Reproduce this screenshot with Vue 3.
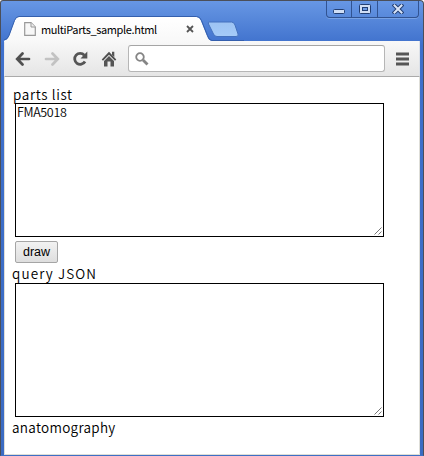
<script setup>
import { ref } from 'vue'

const parts = ref('FMA5018')
const query = ref('')
</script>

<template>
  <div class="window">
    <header class="titlebar">
      <svg class="tab-shape" width="240" height="26" viewBox="0 0 240 26">
        <defs>
          <linearGradient id="tabFill" x1="0" y1="0" x2="0" y2="1">
            <stop offset="0" stop-color="#ffffff" />
            <stop offset="1" stop-color="#f8f8f8" />
          </linearGradient>
          <linearGradient id="newTabFill" x1="0" y1="0" x2="0" y2="1">
            <stop offset="0" stop-color="#9dc3f3" />
            <stop offset="1" stop-color="#a5cbf8" />
          </linearGradient>
        </defs>
        <path d="M0 26V24.500Q3.500 24 5 20L10.500 5Q12 1 15 1H192Q195.500 1 197 5L203 20Q204.500 24.500 208 25H240V26Z" fill="url(#tabFill)" />
        <path d="M0 24Q3.500 23.500 5 19.500L10.500 4.500Q12 .5 15 .5H192.500Q196 .5 197.500 4.500L203.500 19.500Q205 24.500 208 24.500H240" fill="none" stroke="#345fad" stroke-width="1" />
        <path d="M205.500 6H227.500Q230 6 231 9L234 18Q235 20.500 232 20.500H213Q210.500 20.500 209.500 18L204.500 8Q203.700 6 205.500 6Z" fill="url(#newTabFill)" stroke="#4471bd" />
      </svg>
      <div class="tab">
        <svg class="page-icon" width="12" height="14" viewBox="0 0 12 14">
          <path d="M.7.7H7L11.300 5V13.300H.7Z" fill="#f7f7f7" stroke="#999" stroke-width="1.2" />
          <path d="M7 .7V5H11.300" fill="#eee" stroke="#999" />
        </svg>
        <span class="tab-title">multiParts_sample.html</span>
        <svg class="tab-close" width="8" height="8" viewBox="0 0 8 8">
          <path d="M1 1L7 7M7 1L1 7" stroke="#555" stroke-width="1.800" />
        </svg>
      </div>
      <div class="controls">
        <div class="control min">
          <svg width="12" height="5" viewBox="0 0 12 5"><rect x=".5" y=".5" width="11" height="4" rx="1" fill="#d0def5" stroke="#233f73" /></svg>
        </div>
        <div class="control max">
          <svg width="12" height="10" viewBox="0 0 12 10">
            <rect x=".5" y=".5" width="11" height="9" rx="1" fill="#d0def5" stroke="#233f73" />
            <rect x="3.500" y="3.500" width="5" height="3" fill="#6d9be5" stroke="#233f73" />
          </svg>
        </div>
        <div class="control close">
          <svg width="12" height="10" viewBox="0 0 12 10">
            <path d="M2.500 1.500L9.500 8.500M9.500 1.500L2.500 8.500" stroke="#233f73" stroke-width="4" stroke-linecap="square" />
            <path d="M2.500 1.500L9.500 8.500M9.500 1.500L2.500 8.500" stroke="#d8e4f8" stroke-width="2" stroke-linecap="square" />
          </svg>
        </div>
      </div>
    </header>

    <div class="toolbar">
      <svg class="back" width="16" height="14" viewBox="0 0 16 14">
        <path d="M7.500 1.500L2.200 7L7.500 12.500M2.500 7H14" fill="none" stroke="#505050" stroke-width="2.700" stroke-linecap="round" />
      </svg>
      <svg class="forward" width="16" height="14" viewBox="0 0 16 14">
        <path d="M8.500 1.500L13.800 7L8.500 12.500M13.500 7H2" fill="none" stroke="#c2c2c2" stroke-width="2.700" stroke-linecap="round" />
      </svg>
      <svg class="reload" width="16" height="16" viewBox="0 0 16 16">
        <path d="M12.300 4.200A5.500 5.500 0 1 0 13 10.500" fill="none" stroke="#555" stroke-width="2.800" />
        <path d="M15.300 .5V7.500H8.500Z" fill="#555" />
      </svg>
      <svg class="home" width="16" height="16" viewBox="0 0 16 16">
        <path d="M8 .8L15.300 8.500L14 9.800L8 3.800L2 9.800L.7 8.500Z" fill="#505050" />
        <path d="M8 5L13 10V15.500H9.500V10.500H6.500V15.500H3V10Z" fill="#555" />
        <path d="M11 .8H13.300V6L11 4Z" fill="#555" />
      </svg>
      <div class="address">
        <svg width="14" height="14" viewBox="0 0 14 14">
          <circle cx="5" cy="5" r="3.800" fill="none" stroke="#858585" stroke-width="1.800" />
          <path d="M8 8L12.500 12.500" stroke="#858585" stroke-width="2.800" />
        </svg>
      </div>
      <svg class="menu" width="13" height="14" viewBox="0 0 13 14">
        <path d="M0 2H13M0 7H13M0 12H13" stroke="#555" stroke-width="3" />
      </svg>
    </div>

    <main class="page">
      <div class="label parts-label">parts list</div>
      <div class="field">
        <textarea v-model="parts" spellcheck="false"></textarea>
        <svg class="grip" width="8" height="8" viewBox="0 0 8 8"><path d="M.5 7.500L7.500 .5M4.500 7.500L7.500 4.500" stroke="#666" stroke-width=".9" /></svg>
      </div>
      <button class="draw">draw</button>
      <div class="label query-label">query JSON</div>
      <div class="field">
        <textarea v-model="query" spellcheck="false"></textarea>
        <svg class="grip" width="8" height="8" viewBox="0 0 8 8"><path d="M.5 7.500L7.500 .5M4.500 7.500L7.500 4.500" stroke="#666" stroke-width=".9" /></svg>
      </div>
      <div class="label link-label">anatomography</div>
    </main>
  </div>
</template>

<style>
body { margin: 0; overflow: hidden; }
</style>

<style scoped>
* { box-sizing: border-box; }
svg { display: block; flex: none; }
.window {
  display: flex;
  flex-direction: column;
  width: 424px;
  height: 456px;
  border: 1px solid #4b4f59;
  border-bottom: 1px solid #3d6fc5;
  border-radius: 3px 4px 0 0;
  padding: 0 3px;
  background: linear-gradient(#6797e4 0, #3e70cc 45px, #3b6bc2 100%);
  font-family: "Noto Sans CJK JP", sans-serif;
  color: #000;
}
.titlebar {
  position: relative;
  display: flex;
  flex: none;
  height: 40px;
  justify-content: space-between;
}
.tab-shape { position: absolute; left: 0; top: 15px; }
.tab {
  position: relative;
  display: flex;
  align-items: center;
  width: 200px;
  height: 26px;
  margin-top: 15px;
  padding-left: 20px;
}
.tab-title {
  width: 115px;
  margin-left: 5px;
  font-size: 11px;
  line-height: 16px;
  letter-spacing: -0.38px;
  white-space: nowrap;
}
.tab-close { margin-left: 30px; }
.controls {
  display: flex;
  width: 93px;
  height: 17px;
  margin-right: 1px;
  border: 1px solid #315392;
  border-top: 0;
  border-radius: 0 0 4px 4px;
  box-shadow: 0 1px 0 #78a2e5;
}
.control { display: flex; justify-content: center; }
.control + .control { border-left: 1px solid #315392; }
.min { width: 24px; padding-top: 8px; }
.max { width: 26px; padding-top: 3px; }
.close { width: 41px; padding-top: 3px; }
.toolbar {
  display: flex;
  flex: none;
  align-items: center;
  height: 36px;
  padding: 0 10px 0 11px;
  border-bottom: 1px solid #aaa;
  border-left: 1px solid #e5e8ec;
  border-right: 1px solid #dce1e8;
  background: linear-gradient(#f8f8f8, #e5e5e5);
}
.back { margin-left: -1px; }
.forward { margin-left: 13px; }
.reload { margin-left: 12px; }
.home { margin-left: 13px; }
.address {
  display: flex;
  flex: 1;
  align-items: center;
  height: 27px;
  margin: 0 11px;
  padding-left: 6px;
  border: 1px solid #b6b6b6;
  border-top-color: #a5a5a5;
  border-radius: 3px;
  background: #fff;
}
.page {
  flex: 1;
  min-height: 0;
  padding: 9px 0 0 7px;
  border: 1px solid #deded8;
  border-width: 0 1px 1px;
  background: #fff;
}
.label {
  height: 17px;
  font-family: "Noto Sans CJK JP", sans-serif;
  font-weight: 350;
  font-size: 13.5px;
  line-height: 17px;
  white-space: nowrap;
}
.parts-label { letter-spacing: 0.65px; padding-left: 1px; }
.query-label { letter-spacing: 1.1px; margin-top: 2px; }
.link-label { letter-spacing: 0.3px; margin-top: 2px; }
.field {
  position: relative;
  width: 369px;
  height: 134px;
  margin-left: 3px;
}
.query-label + .field { margin-top: 1px; }
textarea {
  display: block;
  width: 100%;
  height: 100%;
  margin: 0;
  padding: 0 1px;
  border: 1px solid #000;
  border-radius: 0;
  outline: none;
  resize: none;
  background: #fff;
  color: #000;
  font-family: "Noto Sans CJK JP", monospace;
  font-weight: 350;
  font-size: 12.5px;
  letter-spacing: -0.35px;
  line-height: 15px;
}
.grip { position: absolute; right: 2px; bottom: 2px; }
.draw {
  display: block;
  width: 43px;
  height: 22px;
  margin: 4px 0 0 3px;
  padding: 0;
  border: 1px solid #a5a5a5;
  border-radius: 2px;
  background: linear-gradient(#f2f2f2, #dedede);
  color: #000;
  font: 12.5px/20px "Liberation Sans", sans-serif;
}
</style>
